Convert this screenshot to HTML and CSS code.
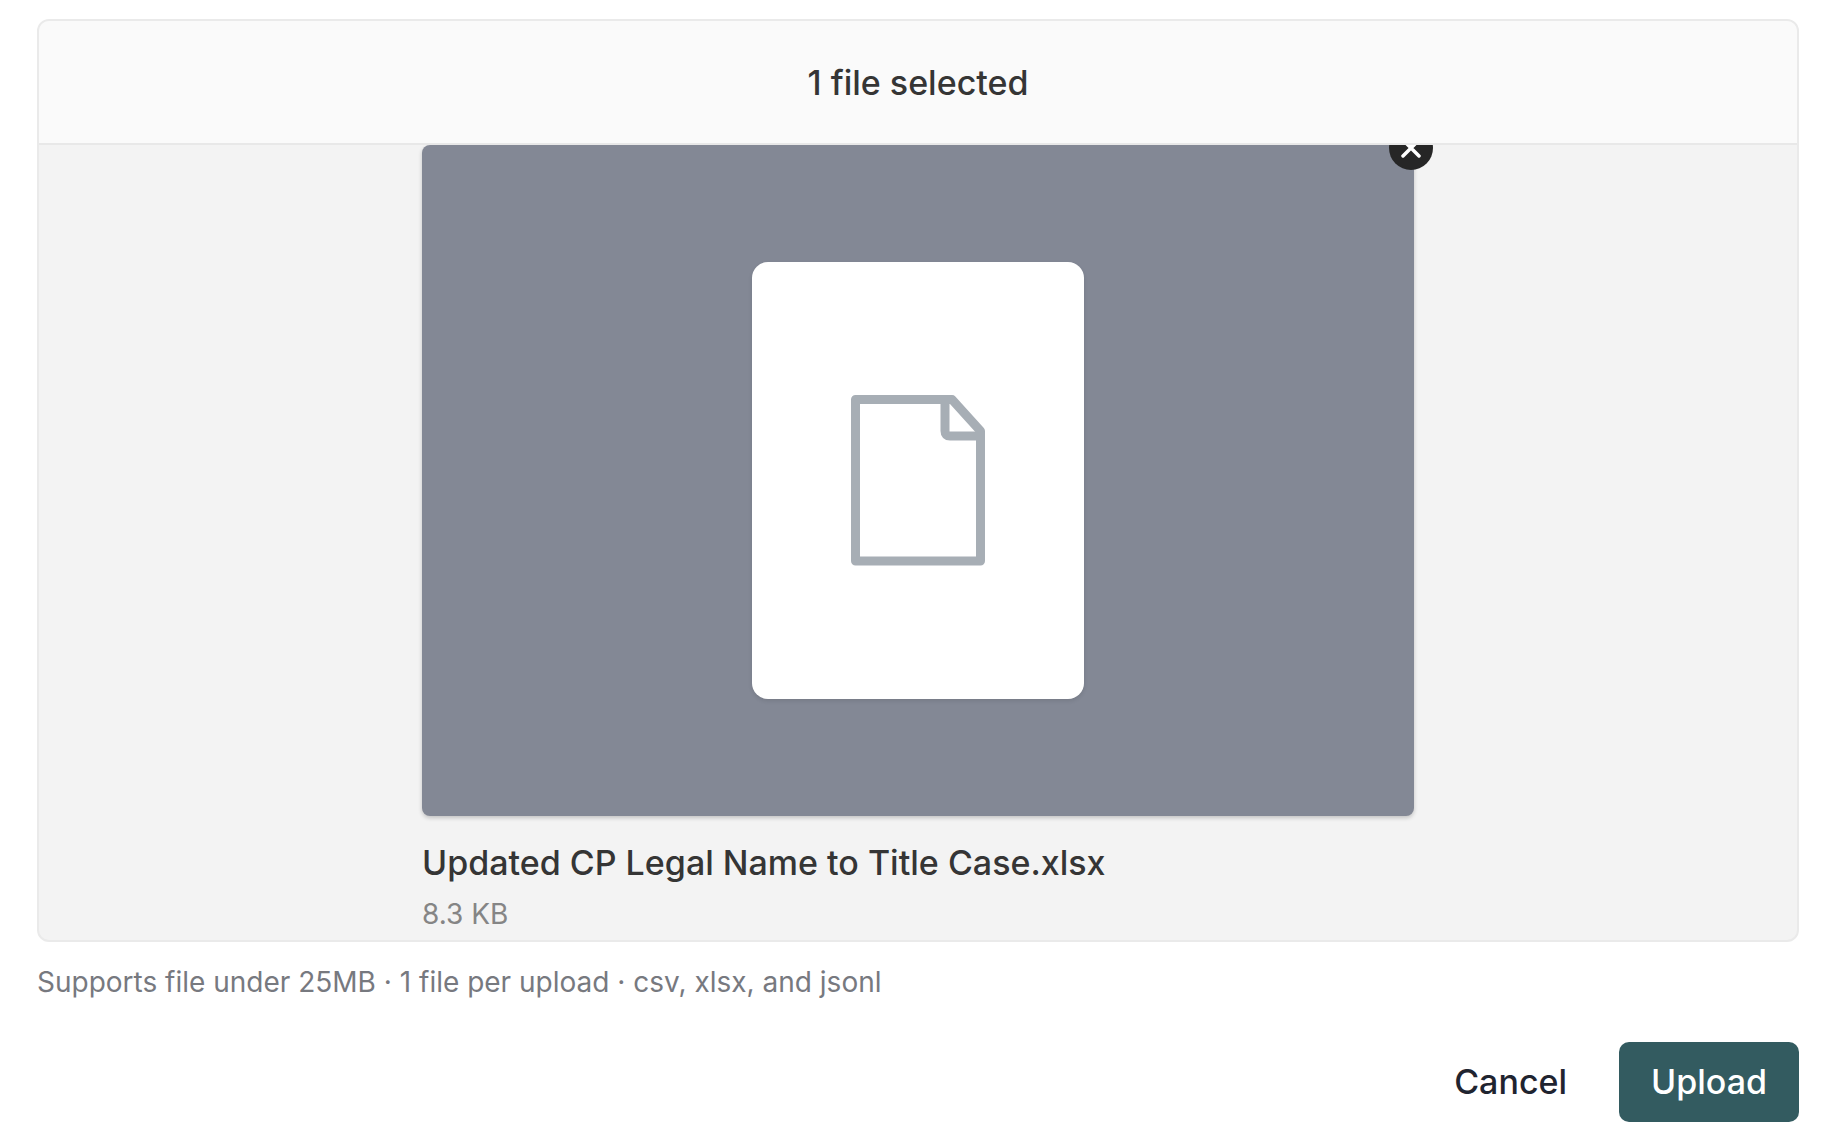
FILE: index.html
```
<!DOCTYPE html>
<html lang="en">
<head>
  <meta charset="UTF-8">
  <meta name="viewport" content="width=device-width, initial-scale=1.0">
  <title>Upload file</title>
  <link rel="stylesheet" href="styles.css">
</head>
<body>
  <main class="uploader">
    <!-- Selected file -->
    <section class="panel">
      <header class="panel-header">
        <h1>1 file selected</h1>
      </header>
      <div class="panel-body">
        <div class="file">
          <div class="preview">
            <div class="page">
              <svg class="page-icon" viewBox="0 0 134 171" fill="none" stroke="currentColor" stroke-width="9" aria-hidden="true">
                <path d="M4.500 4.500H101L129.500 36V166H4.500Z" stroke-linejoin="round"/>
                <path d="M94 6V36Q94 41 99 41H128"/>
              </svg>
            </div>
            <button class="remove" type="button" aria-label="Remove file">
              <svg viewBox="0 0 44 44" width="44" height="44" fill="none" stroke="currentColor" stroke-width="3.500" stroke-linecap="round" aria-hidden="true">
                <path d="M14 14L30 30M30 14L14 30"/>
              </svg>
            </button>
          </div>
          <p class="file-name">Updated CP Legal Name to Title Case.xlsx</p>
          <p class="file-size">8.3 KB</p>
        </div>
      </div>
    </section>
    <p class="hint">Supports file under 25MB · 1 file per upload · csv, xlsx, and jsonl</p>

    <!-- Actions -->
    <footer class="actions">
      <button class="btn" type="button">Cancel</button>
      <button class="btn btn-primary" type="button">Upload</button>
    </footer>
  </main>
</body>
</html>
```

FILE: styles.css
```
* {
  box-sizing: border-box;
}
body {
  margin: 0;
  background: #fff;
  color: #353535;
  font-family: Inter, "Liberation Sans", sans-serif;
}
h1,
p {
  margin: 0;
}
.uploader {
  padding: 19px 39px 20px 37px;
}
.panel {
  border: 2px solid #eaeaea;
  border-radius: 12px;
  background: #f3f3f3;
  overflow: hidden;
}
.panel-header {
  padding: 38px 24px 36px;
  background: #fafafa;
  border-bottom: 2px solid #e8e8e8;
  text-align: center;
}
.panel-header h1,
.file-name {
  font-size: 34px;
  font-weight: 500;
  line-height: 48px;
}
.panel-body {
  padding: 0 24px 6px;
  overflow: hidden;
}
.file {
  max-width: 992px;
  margin: 0 auto;
}
.preview {
  position: relative;
  display: flex;
  align-items: center;
  justify-content: center;
  aspect-ratio: 992 / 671;
  background: #838895;
  border-radius: 8px;
  box-shadow: 0 2px 4px rgba(0, 0, 0, 0.2);
}
.page {
  display: flex;
  align-items: center;
  justify-content: center;
  width: 332px;
  height: 437px;
  background: #fff;
  border-radius: 16px;
  box-shadow: 0 2px 4px rgba(0, 0, 0, 0.1);
}
.page-icon {
  width: 134px;
  height: 171px;
  color: #a7aeb5;
}
/* Sits on the preview corner, cut off by the header edge */
.remove {
  position: absolute;
  top: -19px;
  right: -19px;
  width: 44px;
  height: 44px;
  padding: 0;
  border: none;
  border-radius: 50%;
  background: #262626;
  color: #fff;
  cursor: pointer;
}
.remove svg {
  display: block;
}
.file-name {
  margin-top: 23px;
}
.file-size,
.hint {
  font-size: 28px;
  line-height: 40px;
}
.file-size {
  margin-top: 7px;
  color: #858585;
}
.hint {
  margin-top: 20px;
  color: #77797f;
}
.actions {
  display: flex;
  justify-content: flex-end;
  gap: 20px;
  margin-top: 40px;
}
.btn {
  padding: 16px 32px;
  border: none;
  border-radius: 10px;
  background: none;
  color: #1f2430;
  font-family: inherit;
  font-size: 34px;
  font-weight: 500;
  line-height: 48px;
  cursor: pointer;
}
.btn-primary {
  background: #335b60;
  color: #fff;
}
.btn-primary:hover {
  background: #2b4e52;
}
```
